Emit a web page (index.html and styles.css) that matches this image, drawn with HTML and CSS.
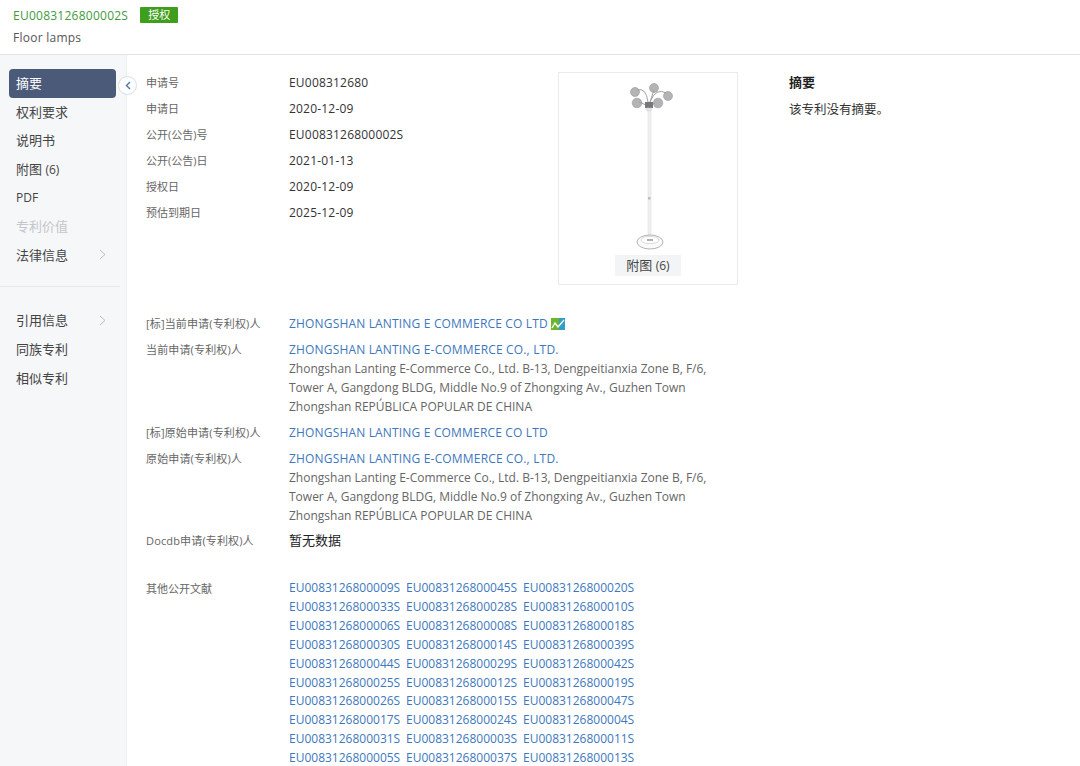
FILE: index.html
```html
<!DOCTYPE html>
<html lang="zh">
<head>
    <meta charset="UTF-8">
    <title>EU0083126800002S</title>
    <link rel="stylesheet" href="styles.css">
</head>
<body>
    <header class="top">
        <div class="top-line">
            <span class="pub-no">EU0083126800002S</span>
            <span class="badge">授权</span>
        </div>
        <div class="top-title">Floor lamps</div>
    </header>

    <div class="page">
        <nav class="side">
            <div class="side-group">
                <a class="side-item active">摘要</a>
                <a class="side-item">权利要求</a>
                <a class="side-item">说明书</a>
                <a class="side-item"><span>附图 <span class="num">(6)</span></span></a>
                <a class="side-item"><span class="num">PDF</span></a>
                <a class="side-item disabled">专利价值</a>
                <a class="side-item">法律信息
                    <svg class="chev" width="7" height="11" viewBox="0 0 7 11"><path d="M1 1l5 4.5L1 10" fill="none" stroke="#b9bdc4" stroke-width="1"/></svg>
                </a>
            </div>
            <div class="side-group second">
                <a class="side-item">引用信息
                    <svg class="chev" width="7" height="11" viewBox="0 0 7 11"><path d="M1 1l5 4.5L1 10" fill="none" stroke="#b9bdc4" stroke-width="1"/></svg>
                </a>
                <a class="side-item">同族专利</a>
                <a class="side-item">相似专利</a>
            </div>
            <button class="collapse">
                <svg width="6" height="9" viewBox="0 0 6 9"><path d="M5 1L1.5 4.5 5 8" fill="none" stroke="#4a76b0" stroke-width="1.4"/></svg>
            </button>
        </nav>

        <main class="content">
            <section class="summary">
                <div class="fields">
                    <div class="field"><span class="label">申请号</span><span class="field-value">EU008312680</span></div>
                    <div class="field"><span class="label">申请日</span><span class="field-value">2020-12-09</span></div>
                    <div class="field"><span class="label">公开(公告)号</span><span class="field-value">EU0083126800002S</span></div>
                    <div class="field"><span class="label">公开(公告)日</span><span class="field-value">2021-01-13</span></div>
                    <div class="field"><span class="label">授权日</span><span class="field-value">2020-12-09</span></div>
                    <div class="field"><span class="label">预估到期日</span><span class="field-value">2025-12-09</span></div>
                </div>
                <div class="figure">
                    <svg class="lamp" width="60" height="170" viewBox="0 0 60 170">
                        <g fill="#b4b4b7" stroke="#98989b" stroke-width="0.6">
                            <circle cx="17" cy="10" r="4.5"/>
                            <circle cx="36" cy="6" r="4.5"/>
                            <circle cx="50" cy="14" r="4.5"/>
                            <circle cx="19" cy="21" r="4.8"/>
                            <circle cx="40" cy="21" r="4.8"/>
                        </g>
                        <path d="M19 8Q28 5 30 20M36 8L32 20M48 11Q38 5 32 20M21 20L28 23M37 21L33 23" fill="none" stroke="#a0a0a3" stroke-width="1"/>
                        <rect x="27" y="20" width="8" height="6" fill="#77777a"/>
                        <path d="M28 26h6l-1 3h-4z" fill="#e8e8e9" stroke="#c8c8ca" stroke-width="0.5"/>
                        <rect x="30" y="29" width="3" height="124" fill="#efeff0" stroke="#dcdcde" stroke-width="0.5"/>
                        <rect x="30" y="115" width="2.5" height="2.5" fill="#bdbdbf"/>
                        <ellipse cx="32" cy="160" rx="13" ry="7" fill="#fafafa" stroke="#b4b4b7"/>
                        <ellipse cx="32" cy="158" rx="9" ry="3.6" fill="#fff" stroke="#cfcfd1" stroke-width="0.7"/>
                        <rect x="29" y="157" width="6" height="2" fill="#b0b0b3"/>
                    </svg>
                    <span class="figure-tag">附图 <span class="num">(6)</span></span>
                </div>
                <div class="abstract">
                    <h3>摘要</h3>
                    <p>该专利没有摘要。</p>
                </div>
            </section>

            <section class="people">
                <div class="row">
                    <span class="label">[标]当前申请(专利权)人</span>
                    <div class="value"><a class="link company">ZHONGSHAN LANTING E COMMERCE CO LTD</a>
                        <svg class="trend" width="14" height="12" viewBox="0 0 14 12"><rect width="14" height="12" fill="#6fb52c"/><rect x="8" width="6" height="12" fill="#2f9fc9"/><path d="M1 10l3-5 3 4 6-7" fill="none" stroke="#fff" stroke-width="1.4"/></svg>
                    </div>
                </div>
                <div class="row">
                    <span class="label">当前申请(专利权)人</span>
                    <div class="value">
                        <a class="link company">ZHONGSHAN LANTING E-COMMERCE CO., LTD.</a>
                        <p class="addr">Zhongshan Lanting E-Commerce Co., Ltd. B-13, Dengpeitianxia Zone B, F/6,<br>Tower A, Gangdong BLDG, Middle No.9 of Zhongxing Av., Guzhen Town<br>Zhongshan REPÚBLICA POPULAR DE CHINA</p>
                    </div>
                </div>
                <div class="row">
                    <span class="label">[标]原始申请(专利权)人</span>
                    <div class="value"><a class="link company">ZHONGSHAN LANTING E COMMERCE CO LTD</a></div>
                </div>
                <div class="row tight">
                    <span class="label">原始申请(专利权)人</span>
                    <div class="value">
                        <a class="link company">ZHONGSHAN LANTING E-COMMERCE CO., LTD.</a>
                        <p class="addr">Zhongshan Lanting E-Commerce Co., Ltd. B-13, Dengpeitianxia Zone B, F/6,<br>Tower A, Gangdong BLDG, Middle No.9 of Zhongxing Av., Guzhen Town<br>Zhongshan REPÚBLICA POPULAR DE CHINA</p>
                    </div>
                </div>
                <div class="row">
                    <span class="label">Docdb申请(专利权)人</span>
                    <div class="value"><span class="none">暂无数据</span></div>
                </div>
            </section>

            <section class="others">
                <span class="label">其他公开文献</span>
                <div class="doc-list">
                    <a class="link">EU0083126800009S</a><a class="link">EU0083126800045S</a><a class="link">EU0083126800020S</a>
                    <a class="link">EU0083126800033S</a><a class="link">EU0083126800028S</a><a class="link">EU0083126800010S</a>
                    <a class="link">EU0083126800006S</a><a class="link">EU0083126800008S</a><a class="link">EU0083126800018S</a>
                    <a class="link">EU0083126800030S</a><a class="link">EU0083126800014S</a><a class="link">EU0083126800039S</a>
                    <a class="link">EU0083126800044S</a><a class="link">EU0083126800029S</a><a class="link">EU0083126800042S</a>
                    <a class="link">EU0083126800025S</a><a class="link">EU0083126800012S</a><a class="link">EU0083126800019S</a>
                    <a class="link">EU0083126800026S</a><a class="link">EU0083126800015S</a><a class="link">EU0083126800047S</a>
                    <a class="link">EU0083126800017S</a><a class="link">EU0083126800024S</a><a class="link">EU0083126800004S</a>
                    <a class="link">EU0083126800031S</a><a class="link">EU0083126800003S</a><a class="link">EU0083126800011S</a>
                    <a class="link">EU0083126800005S</a><a class="link">EU0083126800037S</a><a class="link">EU0083126800013S</a>
                </div>
            </section>
        </main>
    </div>
</body>
</html>
```

FILE: styles.css
```css
html, body {
    height: 766px;
    overflow: hidden;
}
body {
    margin: 0;
    background-color: #fff;
    color: #333;
    font-family: "Open Sans", "Noto Sans CJK SC", sans-serif;
    font-size: 12px;
}
.top {
    height: 55px;
    box-sizing: border-box;
    padding: 6px 13px 0;
    border-bottom: 1px solid #e3e3e3;
}
.top-line {
    display: flex;
    align-items: center;
    gap: 12px;
    height: 18px;
}
.pub-no {
    color: #3f9a3a;
    letter-spacing: 0.25px;
}
.badge {
    background-color: #3f9e1c;
    color: #fff;
    font-size: 11px;
    line-height: 16px;
    padding: 0 8px;
    border-radius: 1px;
}
.top-title {
    margin-top: 5px;
    line-height: 18px;
    color: #555;
    letter-spacing: 0.25px;
}
.page {
    display: flex;
    height: 711px;
}
.side {
    position: relative;
    width: 127px;
    flex-shrink: 0;
    box-sizing: border-box;
    background-color: #f6f7f9;
    border-right: 1px solid #eceef0;
    padding: 14px 10px 0 9px;
}
.side-group {
    display: flex;
    flex-direction: column;
}
.side-group.second {
    margin: 17px -4px 0 -9px;
    padding: 19px 0 0 9px;
    border-top: 1px solid #e8e9eb;
}
.side-group.second .side-item {
    margin-right: 4px;
}
.side-item {
    display: flex;
    align-items: center;
    justify-content: space-between;
    box-sizing: border-box;
    height: 28.6px;
    padding: 0 9px 0 7px;
    color: #444;
    font-size: 13px;
    line-height: 18px;
}
.side-item.active {
    background-color: #4a5a78;
    color: #fff;
    border-radius: 4px;
}
.side-item.disabled {
    color: #c4c6ca;
}
.num {
    font-size: 12px;
}
.chev {
    margin-right: 1px;
}
.collapse {
    position: absolute;
    top: 21px;
    right: -11px;
    width: 19px;
    height: 19px;
    padding: 0;
    display: flex;
    align-items: center;
    justify-content: center;
    background-color: #fff;
    border: 1px solid #d5dfec;
    border-radius: 50%;
}
.content {
    flex: 1;
    padding: 14px 0 0 19px;
}
.label {
    color: #666;
    font-size: 11px;
}
.summary {
    display: flex;
    align-items: flex-start;
}
.fields {
    width: 412px;
    flex-shrink: 0;
}
.field {
    display: flex;
    height: 26px;
    align-items: center;
}
.field .label {
    width: 143px;
}
.field-value {
    letter-spacing: 0.2px;
}
.figure {
    width: 180px;
    height: 213px;
    margin-top: 3px;
    box-sizing: border-box;
    display: flex;
    flex-direction: column;
    align-items: center;
    border: 1px solid #ebebeb;
    flex-shrink: 0;
}
.lamp {
    margin-top: 9px;
}
.figure-tag {
    margin-top: 3px;
    background-color: #f3f4f6;
    line-height: 21px;
    padding: 0 11px;
    color: #444;
    font-size: 13px;
}
.abstract {
    margin-left: 51px;
}
.abstract h3 {
    margin: 5px 0 0;
    font-size: 13px;
    line-height: 16px;
    font-weight: 600;
    color: #222;
}
.abstract p {
    margin: 12px 0 0;
    font-size: 12.5px;
    line-height: 16px;
}
.people {
    margin-top: 29px;
}
.row {
    display: flex;
    margin-bottom: 7px;
}
.row.tight {
    margin-bottom: 6px;
}
.row .label {
    width: 143px;
    flex-shrink: 0;
    line-height: 19px;
    letter-spacing: 0.15px;
}
.value {
    line-height: 19px;
    display: flex;
    flex-direction: column;
    align-items: flex-start;
}
.row:first-child .value {
    flex-direction: row;
    align-items: center;
    gap: 3px;
}
.link {
    color: #3d77bd;
}
.company {
    letter-spacing: 0.17px;
}
.addr {
    margin: 0;
    color: #666;
}
.none {
    color: #222;
    font-size: 13px;
}
.others {
    display: flex;
    margin-top: 29px;
}
.others .label {
    width: 143px;
    flex-shrink: 0;
    line-height: 19px;
}
.doc-list {
    display: grid;
    grid-template-columns: repeat(3, 117px);
    line-height: 18.9px;
}
```
